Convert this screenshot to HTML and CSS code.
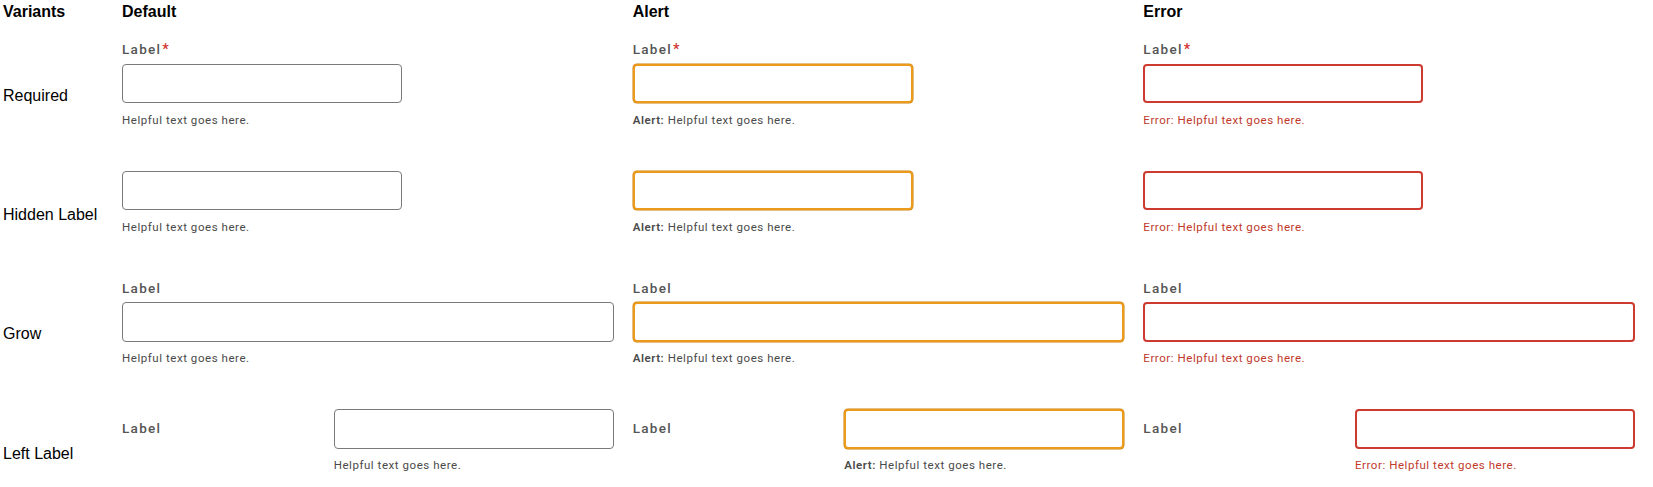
FILE: index.html
```html
<!DOCTYPE html>
<html lang="en">
<head>
<meta charset="utf-8">
<title>Text field variants</title>
<link rel="stylesheet" href="styles.css">
</head>
<body>
<div class="matrix">
  <div class="head">Variants</div>
  <div class="head">Default</div>
  <div class="head">Alert</div>
  <div class="head">Error</div>

  <div class="variant">Required</div>
  <div class="cell">
    <div class="field">
      <label class="label">Label<span class="req">*</span></label>
      <input class="input" type="text">
      <div class="help">Helpful text goes here.</div>
    </div>
  </div>
  <div class="cell">
    <div class="field alert">
      <label class="label">Label<span class="req">*</span></label>
      <input class="input" type="text">
      <div class="help"><b>Alert:</b> Helpful text goes here.</div>
    </div>
  </div>
  <div class="cell">
    <div class="field error">
      <label class="label">Label<span class="req">*</span></label>
      <input class="input" type="text">
      <div class="help"><b>Error:</b> Helpful text goes here.</div>
    </div>
  </div>

  <div class="variant">Hidden Label</div>
  <div class="cell">
    <div class="field">
      <input class="input" type="text" aria-label="Label">
      <div class="help">Helpful text goes here.</div>
    </div>
  </div>
  <div class="cell">
    <div class="field alert">
      <input class="input" type="text" aria-label="Label">
      <div class="help"><b>Alert:</b> Helpful text goes here.</div>
    </div>
  </div>
  <div class="cell">
    <div class="field error">
      <input class="input" type="text" aria-label="Label">
      <div class="help"><b>Error:</b> Helpful text goes here.</div>
    </div>
  </div>

  <div class="variant">Grow</div>
  <div class="cell">
    <div class="field grow">
      <label class="label">Label</label>
      <input class="input" type="text">
      <div class="help">Helpful text goes here.</div>
    </div>
  </div>
  <div class="cell">
    <div class="field grow alert">
      <label class="label">Label</label>
      <input class="input" type="text">
      <div class="help"><b>Alert:</b> Helpful text goes here.</div>
    </div>
  </div>
  <div class="cell">
    <div class="field grow error">
      <label class="label">Label</label>
      <input class="input" type="text">
      <div class="help"><b>Error:</b> Helpful text goes here.</div>
    </div>
  </div>

  <div class="variant">Left Label</div>
  <div class="cell">
    <div class="field left">
      <label class="label">Label</label>
      <input class="input" type="text">
      <div class="help">Helpful text goes here.</div>
    </div>
  </div>
  <div class="cell">
    <div class="field left alert">
      <label class="label">Label</label>
      <input class="input" type="text">
      <div class="help"><b>Alert:</b> Helpful text goes here.</div>
    </div>
  </div>
  <div class="cell">
    <div class="field left error">
      <label class="label">Label</label>
      <input class="input" type="text">
      <div class="help"><b>Error:</b> Helpful text goes here.</div>
    </div>
  </div>
</div>
</body>
</html>
```

FILE: styles.css
```css
html, body {
  margin: 0;
  padding: 0;
  background: #ffffff;
}

body {
  font-family: "Liberation Sans", Arial, sans-serif;
  color: #000;
}

.matrix {
  display: grid;
  grid-template-columns: 115px 1fr 1fr 1fr;
  column-gap: 4px;
  padding: 0 3px;
}

.head {
  font-size: 16px;
  font-weight: bold;
  line-height: 18px;
  padding: 3px 0 8px;
}

.variant {
  font-size: 16px;
  line-height: 18px;
  padding-top: 2px;
  align-self: center;
}

.cell {
  padding: 10px 0 32px;
}

.field {
  display: flex;
  flex-direction: column;
  align-items: flex-start;
  font-family: Roboto, "Liberation Sans", sans-serif;
}

.label {
  font-size: 13.5px;
  font-weight: 500;
  line-height: 21px;
  letter-spacing: 1.3px;
  color: #555555;
  margin-bottom: 3.5px;
}

.req {
  color: #d0342c;
  margin-left: 1px;
  font-size: 14.5px;
}

.input {
  display: block;
  box-sizing: border-box;
  width: 280px;
  height: 39.5px;
  margin: 0;
  padding: 0 10px;
  border: 1px solid #7a7a7a;
  border-radius: 4px;
  background: #ffffff;
  font: inherit;
  outline: none;
}

.help {
  margin-top: 7.5px;
  font-size: 11.5px;
  line-height: 18px;
  letter-spacing: 0.55px;
  color: #4a4a4a;
}

.help b {
  font-weight: 600;
}

.alert .input {
  border: 2px solid #ec9a1c;
  box-shadow: 0 0 0 0.5px #c98210;
}

.error .input {
  border: 2px solid #cc3a30;
}

.error .help {
  color: #c0392b;
}

.error .help b {
  font-weight: 400;
}

.grow .input {
  width: calc(100% - 15px);
}

.left {
  display: grid;
  grid-template-columns: 1fr 280px;
  width: calc(100% - 15px);
  align-items: center;
}

.left .label {
  margin-bottom: 0;
}

.left .help {
  grid-column: 2;
}
```
